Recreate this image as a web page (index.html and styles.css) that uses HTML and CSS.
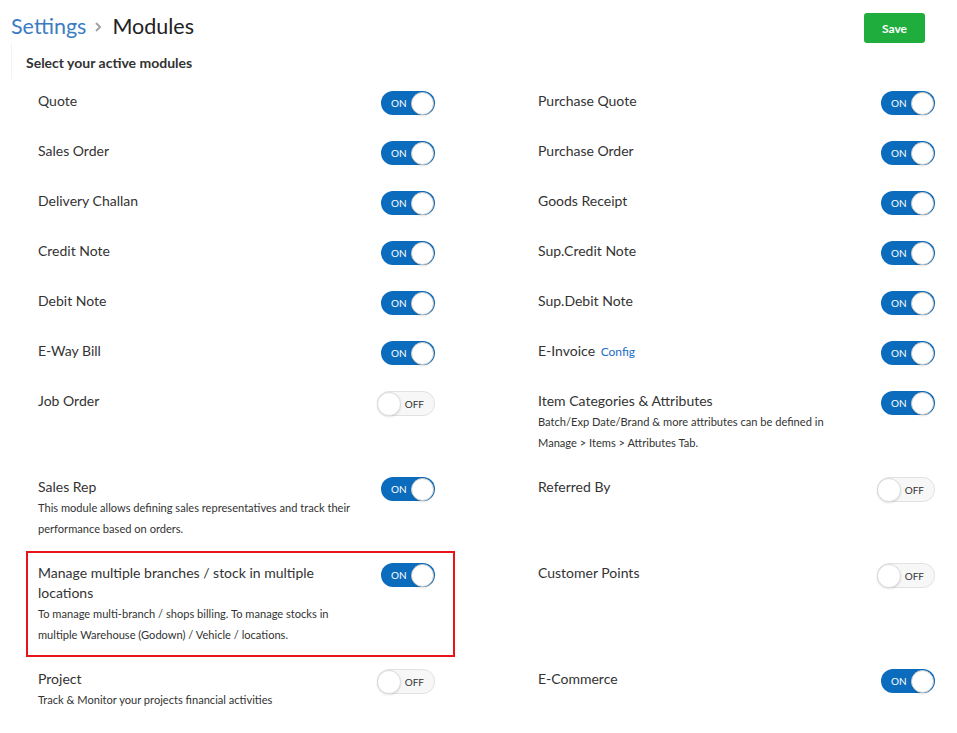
FILE: index.html
```html
<!DOCTYPE html>
<html lang="en">
<head>
  <meta charset="UTF-8">
  <title>Settings - Modules</title>
  <link rel="stylesheet" href="styles.css">
</head>
<body>

  <div class="topbar">
    <div class="crumbs">
      <span class="crumb-link">Settings</span>
      <svg class="crumb-sep" width="6" height="10" viewBox="0 0 6 10"><path d="M1 1 L5 5 L1 9" fill="none" stroke="#a3a3a3" stroke-width="2"/></svg>
      <span class="crumb-current">Modules</span>
    </div>
    <button class="save-btn">Save</button>
  </div>

  <div class="section-head">Select your active modules</div>

  <div class="modules">
    <!-- row 1 -->
    <div class="module">
      <div class="info"><div class="name">Quote</div></div>
      <span class="switch on"><span class="switch-text">ON</span><span class="knob"></span></span>
    </div>
    <div class="module">
      <div class="info"><div class="name">Purchase Quote</div></div>
      <span class="switch on"><span class="switch-text">ON</span><span class="knob"></span></span>
    </div>

    <div class="module">
      <div class="info"><div class="name">Sales Order</div></div>
      <span class="switch on"><span class="switch-text">ON</span><span class="knob"></span></span>
    </div>
    <div class="module">
      <div class="info"><div class="name">Purchase Order</div></div>
      <span class="switch on"><span class="switch-text">ON</span><span class="knob"></span></span>
    </div>

    <div class="module">
      <div class="info"><div class="name">Delivery Challan</div></div>
      <span class="switch on"><span class="switch-text">ON</span><span class="knob"></span></span>
    </div>
    <div class="module">
      <div class="info"><div class="name">Goods Receipt</div></div>
      <span class="switch on"><span class="switch-text">ON</span><span class="knob"></span></span>
    </div>

    <div class="module">
      <div class="info"><div class="name">Credit Note</div></div>
      <span class="switch on"><span class="switch-text">ON</span><span class="knob"></span></span>
    </div>
    <div class="module">
      <div class="info"><div class="name">Sup.Credit Note</div></div>
      <span class="switch on"><span class="switch-text">ON</span><span class="knob"></span></span>
    </div>

    <div class="module">
      <div class="info"><div class="name">Debit Note</div></div>
      <span class="switch on"><span class="switch-text">ON</span><span class="knob"></span></span>
    </div>
    <div class="module">
      <div class="info"><div class="name">Sup.Debit Note</div></div>
      <span class="switch on"><span class="switch-text">ON</span><span class="knob"></span></span>
    </div>

    <div class="module">
      <div class="info"><div class="name">E-Way Bill</div></div>
      <span class="switch on"><span class="switch-text">ON</span><span class="knob"></span></span>
    </div>
    <div class="module">
      <div class="info"><div class="name">E-Invoice <a class="config-link" href="#">Config</a></div></div>
      <span class="switch on"><span class="switch-text">ON</span><span class="knob"></span></span>
    </div>

    <div class="module">
      <div class="info"><div class="name">Job Order</div></div>
      <span class="switch off"><span class="knob"></span><span class="switch-text">OFF</span></span>
    </div>
    <div class="module">
      <div class="info">
        <div class="name">Item Categories &amp; Attributes</div>
        <div class="desc">Batch/Exp Date/Brand &amp; more attributes can be defined in Manage &gt; Items &gt; Attributes Tab.</div>
      </div>
      <span class="switch on"><span class="switch-text">ON</span><span class="knob"></span></span>
    </div>

    <div class="module">
      <div class="info">
        <div class="name">Sales Rep</div>
        <div class="desc">This module allows defining sales representatives and track their performance based on orders.</div>
      </div>
      <span class="switch on"><span class="switch-text">ON</span><span class="knob"></span></span>
    </div>
    <div class="module">
      <div class="info"><div class="name">Referred By</div></div>
      <span class="switch off"><span class="knob"></span><span class="switch-text">OFF</span></span>
    </div>

    <div class="module highlight">
      <div class="info">
        <div class="name">Manage multiple branches / stock in multiple locations</div>
        <div class="desc">To manage multi-branch / shops billing. To manage stocks in multiple Warehouse (Godown) / Vehicle / locations.</div>
      </div>
      <span class="switch on"><span class="switch-text">ON</span><span class="knob"></span></span>
    </div>
    <div class="module">
      <div class="info"><div class="name">Customer Points</div></div>
      <span class="switch off"><span class="knob"></span><span class="switch-text">OFF</span></span>
    </div>

    <div class="module">
      <div class="info">
        <div class="name">Project</div>
        <div class="desc">Track &amp; Monitor your projects financial activities</div>
      </div>
      <span class="switch off"><span class="knob"></span><span class="switch-text">OFF</span></span>
    </div>
    <div class="module">
      <div class="info"><div class="name">E-Commerce</div></div>
      <span class="switch on"><span class="switch-text">ON</span><span class="knob"></span></span>
    </div>
  </div>

</body>
</html>
```

FILE: styles.css
```css
* {
  box-sizing: border-box;
  font-family: 'Lato', sans-serif;
}

body {
  margin: 0;
  padding: 0;
  background-color: #fff;
  color: #333;
}

.topbar {
  display: flex;
  justify-content: space-between;
  align-items: flex-start;
  padding: 11px 32px 0 11px;
  height: 43px;
}

.crumbs {
  display: flex;
  align-items: center;
  font-size: 21.5px;
  line-height: 30px;
}

.crumb-link {
  color: #3b7cc3;
}

.crumb-sep {
  margin: 1px 11px 0 9px;
}

.crumb-current {
  color: #222;
}

.save-btn {
  margin-top: 2px;
  width: 61px;
  height: 30px;
  border: none;
  border-radius: 3px;
  background-color: #1fad3e;
  color: white;
  font-size: 12px;
  font-weight: 700;
  cursor: pointer;
}

.section-head {
  margin-left: 11px;
  padding: 10px 0 6px 14px;
  border-left: 1px solid #f3f3f3;
  font-size: 14px;
  font-weight: 700;
  line-height: 20px;
  color: #333;
}

.modules {
  display: grid;
  grid-template-columns: 429px 429px;
  column-gap: 71px;
  margin-left: 26px;
}

.module {
  display: flex;
  justify-content: space-between;
  align-items: flex-start;
  padding: 10px 18px 10px 10px;
  border: 2px solid transparent;
}

.module.highlight {
  border-color: #e8141b;
}

.info {
  max-width: 322px;
}

.name {
  font-size: 14px;
  line-height: 20px;
  color: #333;
}

.config-link {
  margin-left: 2px;
  font-size: 12px;
  color: #1b6fc7;
  text-decoration: none;
}

.desc {
  font-size: 11.1px;
  line-height: 21px;
  color: #333;
}

.switch {
  display: flex;
  align-items: center;
  height: 24px;
  margin-bottom: 2px;
  border-radius: 12px;
  font-size: 10px;
  flex-shrink: 0;
}

.switch.on {
  width: 54px;
  justify-content: space-between;
  padding: 0 1px 0 10px;
  background-color: #0b6bbc;
  color: white;
}

.switch.off {
  width: 58px;
  height: 25px;
  padding: 0 10px 0 0;
  justify-content: space-between;
  background-color: #f7f7f7;
  border: 1px solid #e2e2e2;
  color: #333;
}

.knob {
  width: 23px;
  height: 23px;
  border-radius: 50%;
  background-color: white;
  border: 1px solid #c9c9c9;
  box-shadow: 0 1px 2px rgba(0, 0, 0, 0.12);
}

.switch.off .knob {
  width: 24px;
  height: 24px;
  margin-left: -1px;
  border-color: #dcdcdc;
}
```
